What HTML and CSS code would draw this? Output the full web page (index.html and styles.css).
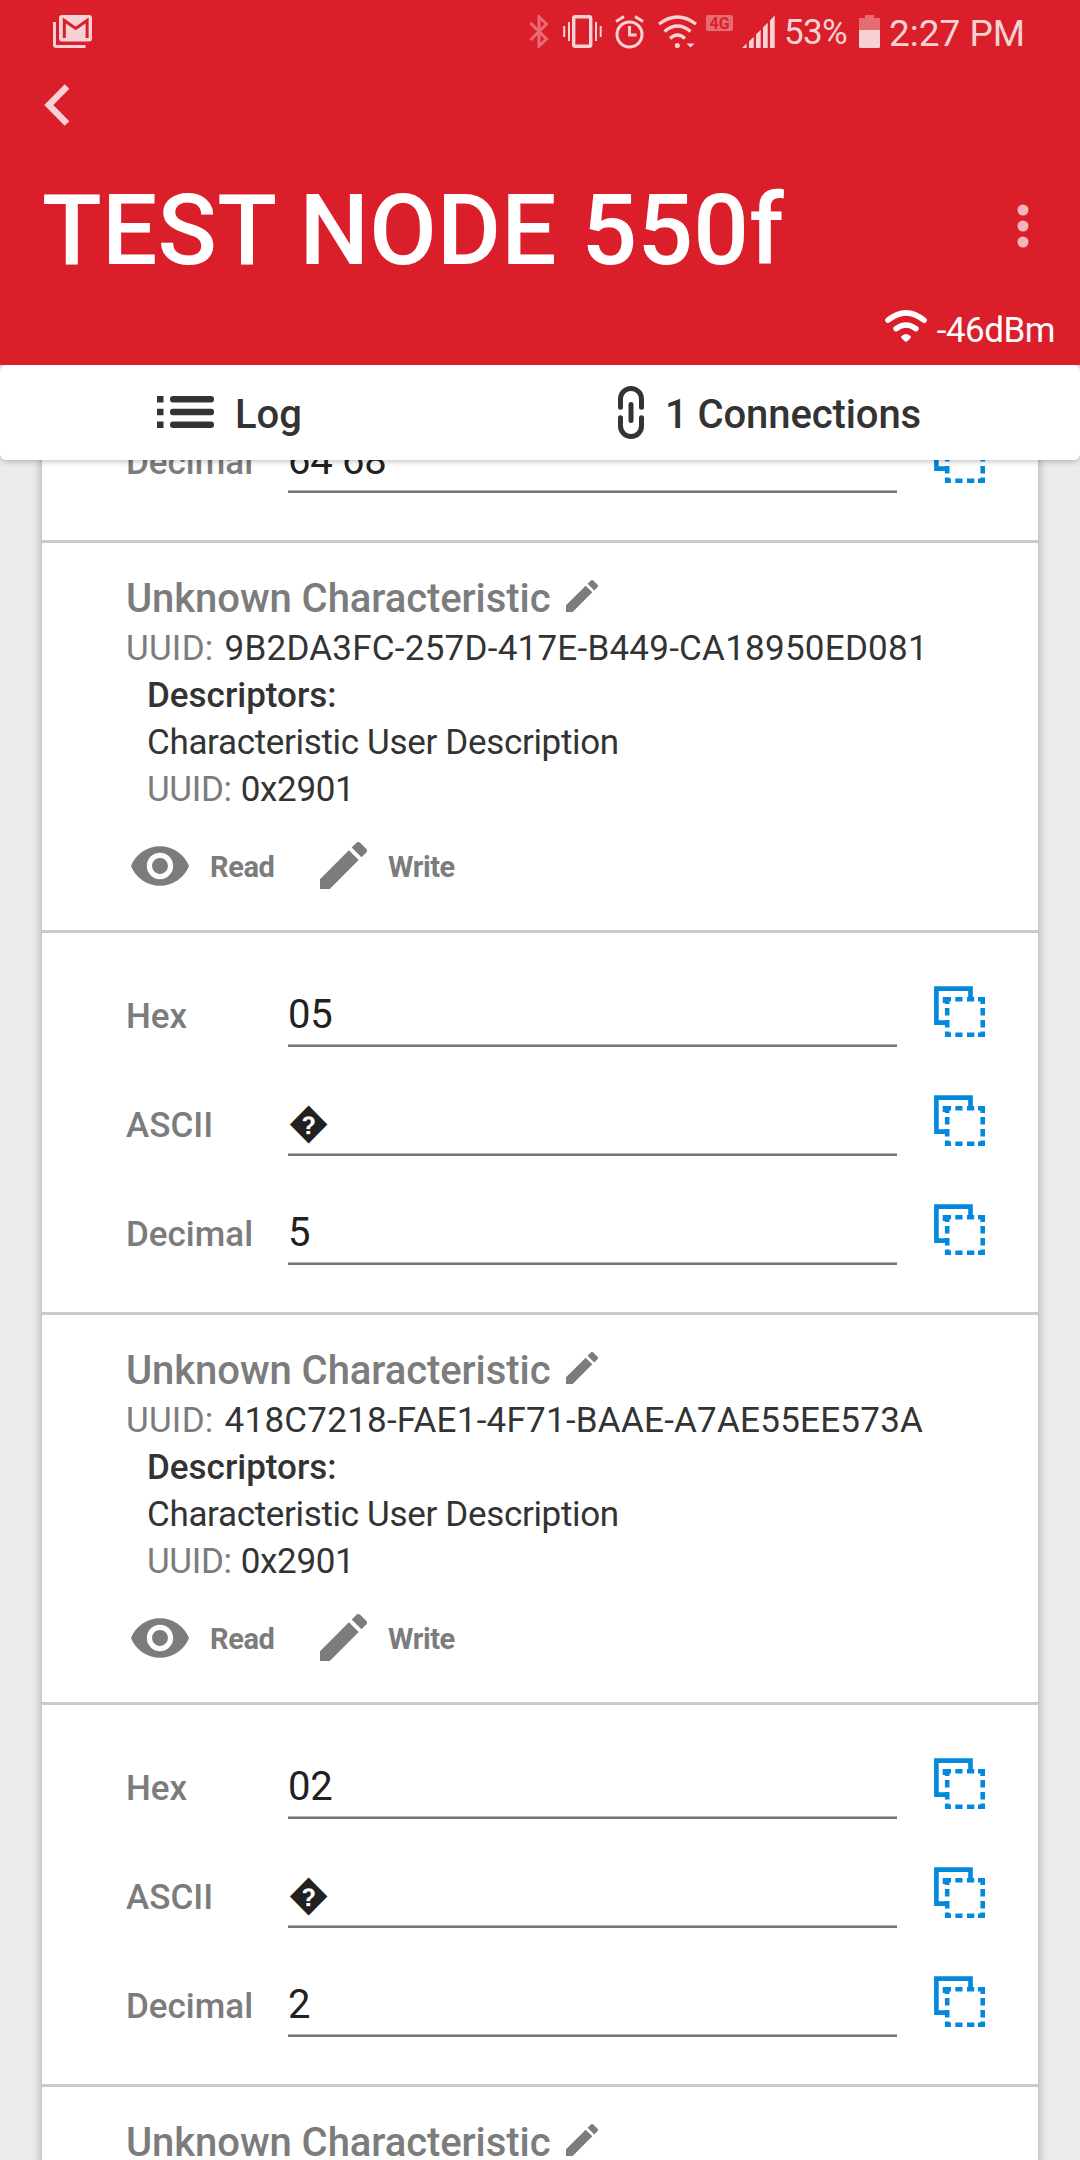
FILE: index.html
```html
<!DOCTYPE html>
<html lang="en">
<head>
<meta charset="utf-8">
<title>TEST NODE 550f</title>
<link rel="stylesheet" href="styles.css">
</head>
<body>
<svg class="defs" width="0" height="0" aria-hidden="true">
  <symbol id="copy" viewBox="0 0 51 51">
    <g fill="none" stroke="#0288dd" stroke-width="4.6">
      <path d="M36.5 12V2.6H2.4V36.6H12"/>
      <path d="M11 17V13.2H17M21.3 13.2h7.2M33 13.2h7.2M44 13.2h4.7V18M48.7 22v7.4M48.7 34v7.4M48.7 45.4v3.3H44M40.3 48.7H33M28.5 48.7h-7.2M17 48.7H13.2V45.4M13.2 41.4V34M13.2 29.4V22M13.2 18V11"/>
    </g>
  </symbol>
  <symbol id="pencil" viewBox="3 3 18 18">
    <path fill="#7c7c7c" d="M3 17.25V21h3.75L17.81 9.94l-3.75-3.75L3 17.25zM20.71 7.04c.39-.39.39-1.02 0-1.41l-2.34-2.34c-.39-.39-1.02-.39-1.41 0l-1.83 1.83 3.75 3.75 1.83-1.83z"/>
  </symbol>
  <symbol id="eye" viewBox="1 4.5 22 15">
    <path fill="#7c7c7c" d="M12 4.5C7 4.5 2.73 7.61 1 12c1.73 4.39 6 7.5 11 7.5s9.27-3.11 11-7.5c-1.73-4.39-6-7.5-11-7.5zM12 17c-2.76 0-5-2.24-5-5s2.24-5 5-5 5 2.24 5 5-2.24 5-5 5zm0-8c-1.66 0-3 1.34-3 3s1.34 3 3 3 3-1.34 3-3-1.34-3-3-3z"/>
  </symbol>
</svg>

<header class="header">
  <div class="status">
    <svg class="s-mail" viewBox="0 0 39 33" width="39" height="33"><path d="M1.5 7v22.5q0 2 2 2H32.5" fill="none" stroke="#f7d2d4" stroke-width="3"/><rect x="6" width="33" height="26.500" rx="3" fill="#f7d2d4"/><path d="M11.300 23V5.500l11.400 8 11.400-8V23" fill="none" stroke="#da1f2a" stroke-width="3"/></svg>
    <svg class="s-bt" viewBox="0 0 20 33" width="20" height="33"><path d="M1.500 8L17.500 24 10 31V2l7.500 7L1.500 25" fill="none" stroke="#e76b73" stroke-width="3"/></svg>
    <svg class="s-vib" viewBox="0 0 39 33" width="39" height="33"><rect x="10.700" y="1.700" width="17" height="29.600" rx="1.500" fill="none" stroke="#f7d2d4" stroke-width="3.400"/><path d="M1.200 11v11M6 7v19M33 7v19M37.700 11v11" stroke="#f7d2d4" stroke-width="2"/></svg>
    <svg class="s-alarm" viewBox="0 0 29 34" width="29" height="34"><g fill="none" stroke="#f7d2d4" stroke-width="3"><circle cx="14.500" cy="19.500" r="12.500"/><path d="M14.500 11v9h7M1 6.500L9 1.500M28 6.500L20 1.500"/></g></svg>
    <svg class="s-wifi" viewBox="0 0 39 33" width="39" height="33"><g fill="none" stroke="#f7d2d4" stroke-width="3.200"><path d="M1 9Q19.500-5 38 9M6.500 16.500Q19.500 5.500 32.500 16.500M12 23.500q7.500-7 15 0"/></g><circle cx="19.300" cy="30.500" r="2.500" fill="#f7d2d4"/><path d="M28.500 28.500h8l-4 4z" fill="#f7d2d4"/></svg>
    <span class="s-4g">4G</span>
    <svg class="s-sig" viewBox="0 0 33 33" width="33" height="33"><path fill="#f7d2d4" d="M0 33l4.500-4.500V33zM7 26.500l4.700-4.700V33H7zM14 19.500l4.700-4.700V33H14zM21 12.500l4.700-4.700V33H21zM28 5.500L32.700.3V33H28z"/></svg>
    <span class="s-pct">53%</span>
    <svg class="s-bat" viewBox="0 0 21 33" width="21" height="33"><path fill="#e76b73" d="M0 3h6V0h9v3h6v12H0z"/><path fill="#f7d2d4" d="M0 15h21v16.500q0 1.500-1.500 1.500h-18Q0 33 0 31.500z"/></svg>
    <span class="s-time">2:27 PM</span>
  </div>
  <svg class="back" viewBox="0 0 26 42" width="26" height="42"><path d="M23 2.500L4.800 21 23 39.500" fill="none" stroke="#f7d2d4" stroke-width="6.500"/></svg>
  <div class="title-row">
    <h1 class="title">TEST NODE 550f</h1>
    <svg class="kebab" viewBox="0 0 12 44" width="12" height="44" fill="#f3b6ba"><circle cx="6" cy="6" r="5.500"/><circle cx="6" cy="22" r="5.500"/><circle cx="6" cy="38" r="5.500"/></svg>
  </div>
  <div class="rssi">
    <svg viewBox="0 0 42 32" width="42" height="32"><g fill="none" stroke="#fff" stroke-width="5.500" stroke-linecap="round"><path d="M3 10.200Q21-4.500 39 10.200M11 18.700q10-7.500 20 0"/></g><path d="M16 26.500q5-5 10 0 .3 1.500-5 5.500-5.300-4-5-5.500z" fill="#fff"/></svg>
    <span class="rssi-text">-46dBm</span>
  </div>
</header>

<nav class="tabs">
  <div class="tab tab-log">
    <svg viewBox="0 0 57 32" width="57" height="32" fill="#333"><path d="M0 0h6.500v6.500H0zM0 12.700h6.500v6.500H0zM0 25.500h6.500V32H0z"/><rect x="13" width="44" height="6.500" rx="3"/><rect x="13" y="12.700" width="44" height="6.500" rx="3"/><rect x="13" y="25.500" width="44" height="6.500" rx="3"/></svg>
    <span class="log-text">Log</span>
  </div>
  <div class="tab tab-conn">
    <svg viewBox="0 0 26 53" width="26" height="53" fill="none" stroke="#333" stroke-width="5" stroke-linecap="round"><path d="M2.500 21.300V13a10.500 10.500 0 0 1 21 0v8.300M2.500 31.700V40a10.500 10.500 0 0 0 21 0v-8.300M13 18.500v16"/></svg>
    <span class="conn-text">1 Connections</span>
  </div>
</nav>

<main class="scroll">
  <div class="card">
    <section class="values first">
      <div class="field"><span class="label">Decimal</span><span class="value">64 68</span><svg class="copy"><use href="#copy"/></svg></div>
    </section>

    <section class="char">
      <h2 class="name"><span>Unknown Characteristic</span><svg class="edit"><use href="#pencil"/></svg></h2>
      <p class="line"><span class="key">UUID:</span><span class="uuid">9B2DA3FC-257D-417E-B449-CA18950ED081</span></p>
      <p class="line sub strong">Descriptors:</p>
      <p class="line sub">Characteristic User Description</p>
      <p class="line sub"><span class="key">UUID:</span><span>0x2901</span></p>
      <div class="actions"><svg class="eye"><use href="#eye"/></svg><span class="read">Read</span><svg class="pen"><use href="#pencil"/></svg><span class="write">Write</span></div>
    </section>
    <section class="values">
      <div class="field"><span class="label">Hex</span><span class="value">05</span><svg class="copy"><use href="#copy"/></svg></div>
      <div class="field"><span class="label">ASCII</span><span class="value">&#xFFFD;</span><svg class="copy"><use href="#copy"/></svg></div>
      <div class="field"><span class="label">Decimal</span><span class="value">5</span><svg class="copy"><use href="#copy"/></svg></div>
    </section>

    <section class="char">
      <h2 class="name"><span>Unknown Characteristic</span><svg class="edit"><use href="#pencil"/></svg></h2>
      <p class="line"><span class="key">UUID:</span><span class="uuid">418C7218-FAE1-4F71-BAAE-A7AE55EE573A</span></p>
      <p class="line sub strong">Descriptors:</p>
      <p class="line sub">Characteristic User Description</p>
      <p class="line sub"><span class="key">UUID:</span><span>0x2901</span></p>
      <div class="actions"><svg class="eye"><use href="#eye"/></svg><span class="read">Read</span><svg class="pen"><use href="#pencil"/></svg><span class="write">Write</span></div>
    </section>
    <section class="values">
      <div class="field"><span class="label">Hex</span><span class="value">02</span><svg class="copy"><use href="#copy"/></svg></div>
      <div class="field"><span class="label">ASCII</span><span class="value">&#xFFFD;</span><svg class="copy"><use href="#copy"/></svg></div>
      <div class="field"><span class="label">Decimal</span><span class="value">2</span><svg class="copy"><use href="#copy"/></svg></div>
    </section>

    <section class="char">
      <h2 class="name"><span>Unknown Characteristic</span><svg class="edit"><use href="#pencil"/></svg></h2>
    </section>
  </div>
</main>
</body>
</html>
```
FILE: styles.css
```css
* { box-sizing: border-box; }
html, body { margin: 0; height: 2160px; overflow: hidden; }
body {
  width: 1080px;
  display: flex;
  flex-direction: column;
  background: #ebebeb;
  color: #333;
  font-family: Roboto, "Noto Sans", sans-serif;
}
svg { display: block; flex: none; }
.defs { position: absolute; }
span { white-space: nowrap; }

.header { height: 365px; background: #da1f2a; color: #fff; flex: none; }
.status { display: flex; height: 84px; padding: 15px 0 0 53px; color: #f7d2d4; line-height: 33px; }
.s-bt { margin-left: 437px; }
.s-vib { margin-left: 14px; }
.s-alarm { margin-left: 13px; }
.s-wifi { margin-left: 14px; }
.s-4g {
  margin-left: 9px; width: 27px; height: 16px; border-radius: 2px;
  background: #e76b73; color: #da1f2a;
  font-size: 16px; line-height: 17px; font-weight: 700; text-align: center;
}
.s-sig { margin-left: 9px; }
.s-pct { margin-left: 9px; width: 64px; font-size: 35px; line-height: 35px; font-weight: 370; letter-spacing: -.7px; }
.s-bat { margin-left: 11px; }
.s-time { margin-left: 9px; font-size: 37px; line-height: 37px; font-weight: 370; }
.back { margin-left: 44px; }
.title-row { display: flex; justify-content: space-between; padding: 47px 51px 0 42px; height: 184px; }
.title { margin: 0; font-size: 98px; line-height: 115px; font-weight: 500; letter-spacing: .25px; white-space: nowrap; }
.kebab { margin-top: 31px; }
.rssi { display: flex; justify-content: flex-end; padding-right: 25px; gap: 10px; }
.rssi-text { font-size: 35px; line-height: 41px; letter-spacing: -.5px; font-weight: 370; }

.tabs {
  position: relative;
  z-index: 1;
  display: flex;
  flex: none;
  height: 95px;
  background: #fff;
  border-radius: 6px;
  box-shadow: 0 1px 6px rgba(0, 0, 0, .28);
  clip-path: inset(0 0 -12px 0);
  font-size: 40px;
  line-height: 47px;
  font-weight: 500;
}
.tab { display: flex; }
.tab-log { width: 540px; padding: 26px 0 0 157px; gap: 21px; }
.tab-log svg { margin-top: 5px; }
.tab-conn { padding: 21px 0 0 78px; gap: 21px; }
.conn-text { margin-top: 5px; letter-spacing: -.1px; }

.scroll { flex: 1; min-height: 0; overflow: hidden; padding: 0 42px; }
.card { margin-top: -81px; background: #fff; box-shadow: 0 2px 9px rgba(0, 0, 0, .32); }

.values { padding: 5px 0 47px 84px; border-bottom: 3px solid #cacaca; }
.field { display: flex; align-items: flex-end; height: 109px; }
.label { width: 162px; margin-bottom: 7px; font-size: 35px; line-height: 47px; font-weight: 500; color: #7c7c7c; }
.value {
  width: 609px; height: 56px; padding-bottom: 7px;
  border-bottom: 2px solid #757575;
  box-shadow: inset 0 -1px #b4b4b4;
  font-size: 40px; line-height: 47px; font-weight: 370; letter-spacing: -.3px; color: #212121;
}
.copy { width: 51px; height: 51px; margin: 0 0 10px 37px; }

.char { height: 390px; padding: 32px 0 0 84px; border-bottom: 3px solid #cacaca; }
.name { display: flex; gap: 16px; margin: 0 0 3px; font-size: 40px; line-height: 47px; font-weight: 500; letter-spacing: -.07px; color: #7c7c7c; }
.edit { width: 32px; height: 32px; margin-top: 5px; }
.line { display: flex; gap: 11px; margin: 0; font-size: 35px; line-height: 47px; font-weight: 370; letter-spacing: .24px; }
.sub { padding-left: 21px; gap: 9px; letter-spacing: -.33px; }
.strong { font-weight: 500; letter-spacing: 0; }
.key { color: #7c7c7c; }
.actions { display: flex; align-items: center; height: 47px; margin: 29px 0 0 5px; font-size: 29px; line-height: 47px; font-weight: 700; letter-spacing: -.4px; color: #7c7c7c; }
.eye { width: 58px; height: 40px; }
.read { margin: 3px 0 0 21px; width: 68px; }
.write { margin-top: 3px; }
.pen { width: 47px; height: 47px; margin: 0 21px 0 42px; }
```
